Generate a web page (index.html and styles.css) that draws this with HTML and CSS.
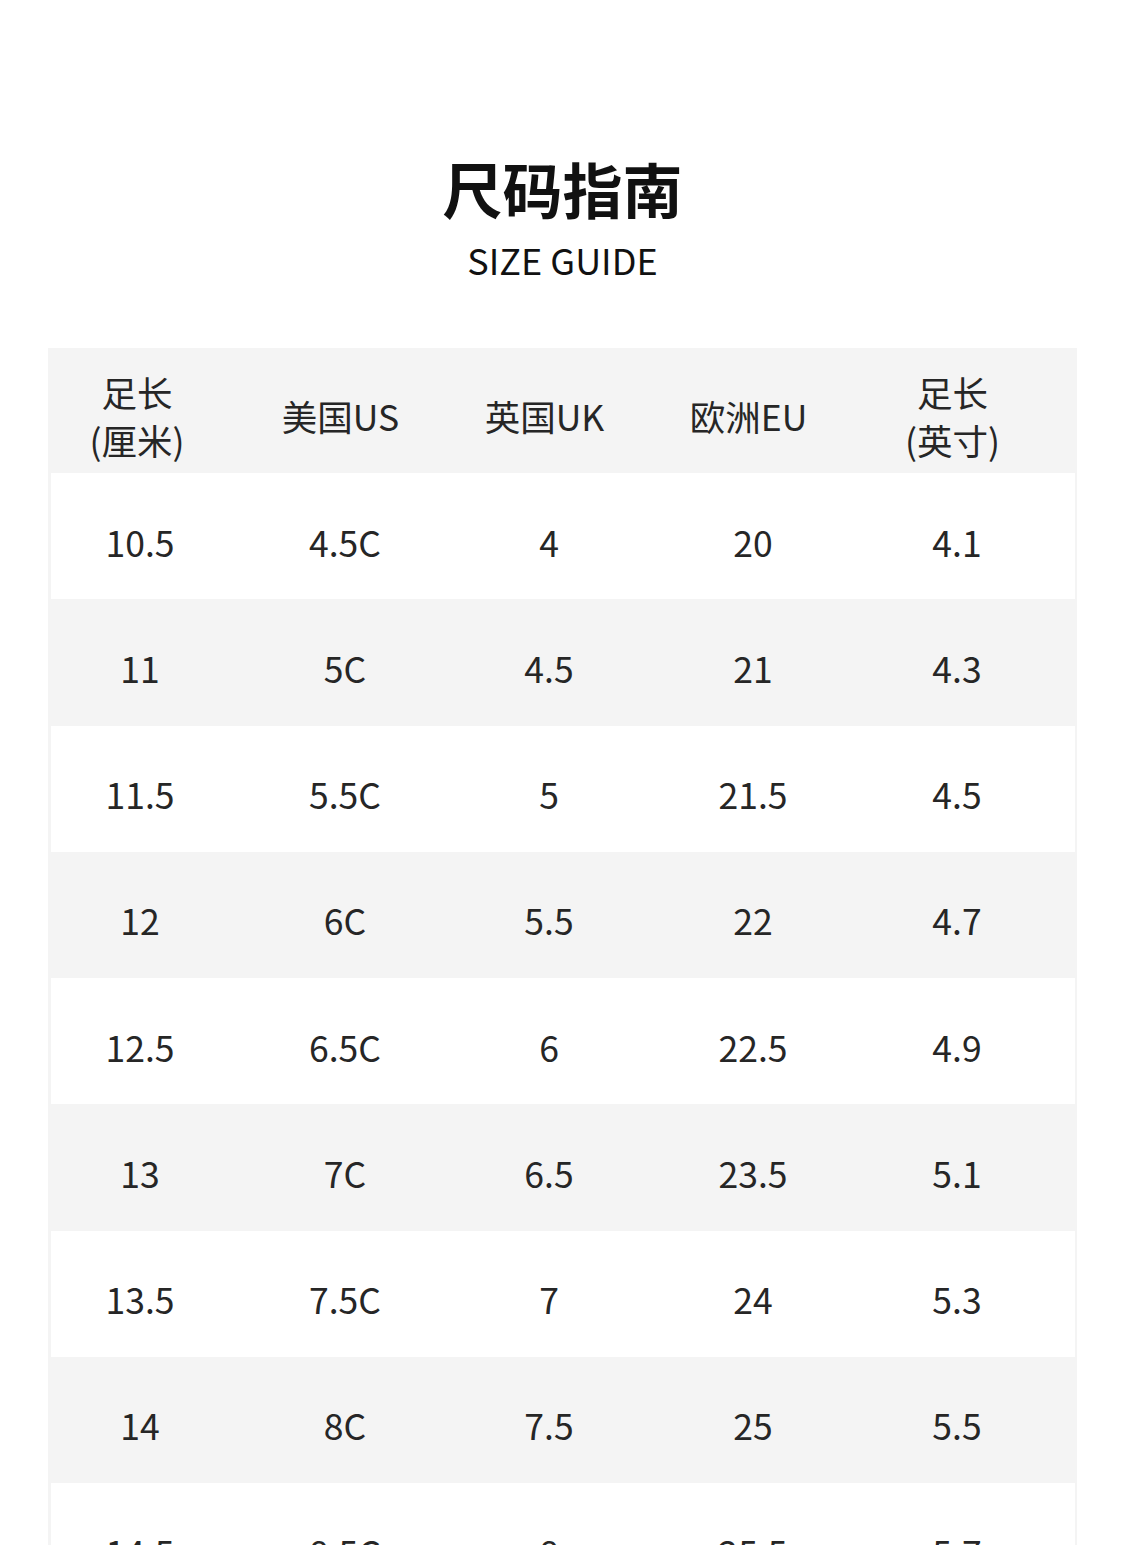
FILE: index.html
```html
<!DOCTYPE html>
<html lang="zh-CN">
<head>
<meta charset="utf-8">
<title>尺码指南</title>
<link rel="stylesheet" href="styles.css">
</head>
<body>
<main class="page">
  <header class="heading">
    <h1 class="title">尺码指南</h1>
    <p class="subtitle">SIZE GUIDE</p>
  </header>
  <section class="table">
    <div class="row head">
      <div class="cell">足长<br>(厘米)</div>
      <div class="cell">美国US</div>
      <div class="cell">英国UK</div>
      <div class="cell">欧洲EU</div>
      <div class="cell">足长<br>(英寸)</div>
    </div>
    <div class="row light"><div class="cell">10.5</div><div class="cell">4.5C</div><div class="cell">4</div><div class="cell">20</div><div class="cell">4.1</div></div>
    <div class="row grey"><div class="cell">11</div><div class="cell">5C</div><div class="cell">4.5</div><div class="cell">21</div><div class="cell">4.3</div></div>
    <div class="row light"><div class="cell">11.5</div><div class="cell">5.5C</div><div class="cell">5</div><div class="cell">21.5</div><div class="cell">4.5</div></div>
    <div class="row grey"><div class="cell">12</div><div class="cell">6C</div><div class="cell">5.5</div><div class="cell">22</div><div class="cell">4.7</div></div>
    <div class="row light"><div class="cell">12.5</div><div class="cell">6.5C</div><div class="cell">6</div><div class="cell">22.5</div><div class="cell">4.9</div></div>
    <div class="row grey"><div class="cell">13</div><div class="cell">7C</div><div class="cell">6.5</div><div class="cell">23.5</div><div class="cell">5.1</div></div>
    <div class="row light"><div class="cell">13.5</div><div class="cell">7.5C</div><div class="cell">7</div><div class="cell">24</div><div class="cell">5.3</div></div>
    <div class="row grey"><div class="cell">14</div><div class="cell">8C</div><div class="cell">7.5</div><div class="cell">25</div><div class="cell">5.5</div></div>
    <div class="row light"><div class="cell">14.5</div><div class="cell">8.5C</div><div class="cell">8</div><div class="cell">25.5</div><div class="cell">5.7</div></div>
  </section>
</main>
</body>
</html>
```
FILE: styles.css
```css
html, body {
  margin: 0;
  padding: 0;
  background: #ffffff;
}
body {
  font-family: "Noto Sans CJK SC", "Noto Sans", sans-serif;
  color: #222;
  height: 1545px;
  overflow: hidden;
}
.page {
  padding-top: 158px;
}
.heading {
  display: flex;
  flex-direction: column;
  align-items: center;
}
.title {
  margin: 0;
  font-size: 60px;
  line-height: 60px;
  font-weight: 700;
  color: #111;
  letter-spacing: 0;
}
.subtitle {
  margin: 19px 0 0;
  font-size: 36px;
  line-height: 44px;
  font-weight: 400;
  color: #111;
}
.table {
  margin: 67px 0 0 48px;
  width: 1029px;
  box-sizing: border-box;
  background: #f4f4f4;
  padding: 0 2px 0 3px;
}
.row {
  display: grid;
  grid-template-columns: 192px repeat(4, 204px);
  align-items: center;
  height: 126.25px;
  box-sizing: border-box;
  padding-top: 11px;
  font-size: 35.5px;
  color: #262626;
}
.row .cell {
  text-align: center;
  line-height: 48px;
}
.row .cell:first-child {
  padding-right: 14px;
}
.head {
  height: 125px;
  background: #f4f4f4;
}
.head .cell {
  padding-right: 9px;
}
.head .cell:first-child {
  padding-right: 20px;
}
.light {
  background: #ffffff;
}
.grey {
  background: #f4f4f4;
}
```
